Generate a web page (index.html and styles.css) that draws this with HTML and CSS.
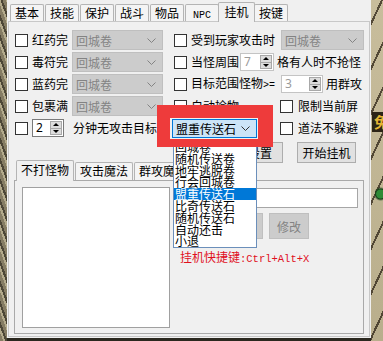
FILE: index.html
```html
<!DOCTYPE html>
<html lang="zh-CN">
<head>
    <meta charset="UTF-8">
    <meta name="viewport" content="width=device-width, initial-scale=1.0">
    <title>挂机设置</title>
    <link rel="stylesheet" href="styles.css">
</head>
<body>
    <span class="game-badge">免</span>
    <span class="game-green"></span>

    <div class="dialog">
        <div class="tabs">
            <span class="tab">基本</span>
            <span class="tab">技能</span>
            <span class="tab">保护</span>
            <span class="tab">战斗</span>
            <span class="tab">物品</span>
            <span class="tab"><span class="asc">NPC</span></span>
            <span class="tab active">挂机</span>
            <span class="tab">按键</span>
        </div>

        <div class="page">
            <div class="row">
                <div class="left">
                    <span class="check"></span><span class="label">红药完</span>
                    <div class="combo off short"><span>回城卷</span><svg width="9" height="5" viewBox="0 0 9 5"><path d="M.5 .5 4.5 4.5 8.5 .5" fill="none" stroke="currentColor"/></svg></div>
                </div>
                <div class="right">
                    <span class="check"></span><span class="label">受到玩家攻击时</span>
                    <div class="combo off long"><span>回城卷</span><svg width="9" height="5" viewBox="0 0 9 5"><path d="M.5 .5 4.5 4.5 8.5 .5" fill="none" stroke="currentColor"/></svg></div>
                </div>
            </div>

            <div class="row">
                <div class="left">
                    <span class="check"></span><span class="label">毒符完</span>
                    <div class="combo off short"><span>回城卷</span><svg width="9" height="5" viewBox="0 0 9 5"><path d="M.5 .5 4.5 4.5 8.5 .5" fill="none" stroke="currentColor"/></svg></div>
                </div>
                <div class="right">
                    <span class="check"></span><span class="label">当怪周围</span>
                    <div class="spin off range"><span class="val">7</span><span class="arrows"><i class="up"></i><i class="down"></i></span></div>
                    <span class="label tail">格有人时不抢怪</span>
                </div>
            </div>

            <div class="row">
                <div class="left">
                    <span class="check"></span><span class="label">蓝药完</span>
                    <div class="combo off short"><span>回城卷</span><svg width="9" height="5" viewBox="0 0 9 5"><path d="M.5 .5 4.5 4.5 8.5 .5" fill="none" stroke="currentColor"/></svg></div>
                </div>
                <div class="right">
                    <span class="check"></span><span class="label">目标范围怪物<span class="asc">&gt;=</span></span>
                    <div class="spin off count"><span class="val">3</span><span class="arrows"><i class="up"></i><i class="down"></i></span></div>
                    <span class="label tail">用群攻</span>
                </div>
            </div>

            <div class="row">
                <div class="left">
                    <span class="check"></span><span class="label">包裹满</span>
                    <div class="combo off short"><span>回城卷</span><svg width="9" height="5" viewBox="0 0 9 5"><path d="M.5 .5 4.5 4.5 8.5 .5" fill="none" stroke="currentColor"/></svg></div>
                </div>
                <div class="right">
                    <div class="pick"><span class="check"></span><span class="label">自动捡物</span></div>
                    <span class="check"></span><span class="label wide">限制当前屏</span>
                </div>
            </div>

            <div class="row">
                <span class="check"></span>
                <div class="spin minutes"><span class="val">2</span><span class="arrows"><i class="up"></i><i class="down"></i></span></div>
                <span class="label idle">分钟无攻击目标时</span>
                <div class="combo open"><span>盟重传送石</span><svg width="9" height="5" viewBox="0 0 9 5"><path d="M.5 .5 4.5 4.5 8.5 .5" fill="none" stroke="currentColor"/></svg></div>
                <span class="check dodge"></span><span class="label wide">道法不躲避</span>
            </div>

            <div class="actions">
                <button class="btn save">保存设置</button>
                <button class="btn start">开始挂机</button>
            </div>

            <div class="sub">
                <div class="subtabs">
                    <span class="subtab active">不打怪物</span>
                    <span class="subtab">攻击魔法</span>
                    <span class="subtab">群攻魔法</span>
                </div>
                <div class="subpage">
                    <div class="listbox"></div>
                    <div class="editor">
                        <div class="field"></div>
                        <div class="edit-actions">
                            <button class="btn off">添加</button>
                            <button class="btn off">修改</button>
                        </div>
                        <div class="hotkey">挂机快捷键<span class="asc">:Ctrl+Alt+X</span></div>
                    </div>
                </div>
            </div>
        </div>

        <ul class="droplist">
            <li>回城卷</li>
            <li>随机传送卷</li>
            <li>地牢逃脱卷</li>
            <li>行会回城卷</li>
            <li class="sel">盟重传送石</li>
            <li>比奇传送石</li>
            <li>随机传送石</li>
            <li>自动还击</li>
            <li>小退</li>
        </ul>

        <div class="mark"></div>
    </div>
</body>
</html>
```

FILE: styles.css
```css
* {
    box-sizing: border-box;
}

body {
    margin: 0;
    width: 383px;
    height: 341px;
    overflow: hidden;
    position: relative;
    font-family: "Noto Sans CJK SC", "Noto Sans", sans-serif;
    font-size: 12px;
    color: #000;
    background:
        repeating-linear-gradient(115deg, transparent 0 9px, rgba(45, 35, 22, 0.75) 9px 11px, transparent 11px 19px) right top / 12px 100% no-repeat,
        linear-gradient(#c8bd9c, #b9ae8c) right top / 12px 100% no-repeat,
        repeating-linear-gradient(70deg, #857c63 0 3px, #b3aa8b 3px 5px, #4c4636 5px 7px) left top / 7px 100% no-repeat,
        #2b281f;
}

.asc {
    font-family: "Liberation Mono", monospace;
    font-size: 10px;
}

.game-badge {
    position: absolute;
    left: 372px;
    top: 112px;
    width: 11px;
    height: 20px;
    overflow: hidden;
    background: #2c2416;
    color: #e6b634;
    font-size: 15px;
    font-weight: bold;
    line-height: 20px;
    padding-left: 2px;
}

.game-green {
    position: absolute;
    left: 375px;
    top: 186px;
    width: 8px;
    height: 16px;
    background: radial-gradient(circle at 70% 50%, #2f8a36 0 4px, #18401a 5px, transparent 7px);
}

.dialog {
    position: relative;
    margin-left: 7px;
    width: 364px;
    height: 338px;
    background: #f0f0f0;
}

/* main tabs */
.tabs {
    display: flex;
    align-items: flex-end;
    gap: 1px;
    height: 21px;
    padding-left: 3px;
}

.tab {
    min-width: 34px;
    height: 17px;
    padding: 0 4px;
    border: 1px solid #b4b4b4;
    border-bottom: none;
    border-radius: 2px 2px 0 0;
    background: #f4f4f4;
    text-align: center;
    line-height: 15px;
    white-space: nowrap;
}

.tab.active {
    position: relative;
    z-index: 1;
    min-width: 37px;
    height: 20px;
    margin: 0 -2px -1px;
    background: #f0f0f0;
    line-height: 17px;
}

.page {
    margin: 0 1px;
    height: 316px;
    border: 1px solid #c8c8c8;
    padding: 7px 0 0 6px;
}

/* option rows */
.row {
    display: flex;
    align-items: center;
    height: 22px;
}

.left {
    display: flex;
    align-items: center;
    width: 159px;
}

.right {
    display: flex;
    align-items: center;
}

.check {
    flex: none;
    width: 13px;
    height: 13px;
    border: 1px solid #333;
    background: #fff;
}

.label {
    margin-left: 4px;
    line-height: 14px;
    white-space: nowrap;
}

.label.wide {
    margin-left: 5px;
}

.label.tail {
    margin-left: 3px;
}

.pick {
    display: flex;
    align-items: center;
    width: 106px;
}

.combo {
    display: flex;
    align-items: center;
    justify-content: space-between;
    height: 20px;
    padding: 0 6px 0 3px;
    border: 1px solid #bfbfbf;
    white-space: nowrap;
}

.combo.off {
    background: #cccccc;
    color: #838383;
}

.combo.short {
    width: 91px;
    margin-left: 4px;
}

.combo.long {
    width: 83px;
    margin-left: 6px;
}

.combo.open {
    width: 85px;
    height: 19px;
    margin-left: 3px;
    border-color: #0078d7;
    background: #cce4f7;
    color: #000;
}

.combo.open svg {
    color: #333;
}

.spin {
    display: flex;
    height: 18px;
    border: 1px solid #7a7a7a;
    background: #fff;
}

.spin.off {
    border-color: #c4c4c4;
    color: #9a9a9a;
}

.spin .val {
    flex: 1;
    padding-left: 3px;
    font-family: "Noto Sans", sans-serif;
    line-height: 16px;
}

.spin .arrows {
    display: flex;
    flex-direction: column;
    width: 12px;
    margin: 1px;
    background: #dcdcdc;
    border: 1px solid #a8a8a8;
}

.spin .arrows i {
    flex: 1;
    display: flex;
    align-items: center;
    justify-content: center;
}

.spin .arrows .up {
    border-bottom: 1px solid #a8a8a8;
}

.spin .arrows .up::after {
    content: "";
    border-left: 3px solid transparent;
    border-right: 3px solid transparent;
    border-bottom: 3px solid #000;
}

.spin .arrows .down::after {
    content: "";
    border-left: 3px solid transparent;
    border-right: 3px solid transparent;
    border-top: 3px solid #000;
}

.spin.range {
    width: 34px;
    margin-left: 1px;
}

.spin.count {
    width: 42px;
    margin-left: 6px;
}

.spin.minutes {
    width: 32px;
    margin-left: 4px;
}

.label.idle {
    margin-left: 9px;
}

.check.dodge {
    margin-left: 23px;
}

/* buttons */
.actions {
    display: flex;
    justify-content: flex-end;
    gap: 14px;
    margin-top: 3px;
    padding-right: 13px;
}

.btn {
    height: 21px;
    padding: 0;
    border: 1px solid #adadad;
    background: #e1e1e1;
    font: inherit;
    color: #000;
}

.btn.save {
    width: 70px;
}

.btn.start {
    width: 59px;
}

.btn.off {
    width: 40px;
    height: 26px;
    border-color: #bfbfbf;
    background: #cccccc;
    color: #838383;
}

/* inner tabs */
.sub {
    width: 350px;
    margin: -3px 0 0 -1px;
}

.subtabs {
    display: flex;
    align-items: flex-end;
    gap: 1px;
    height: 20px;
    padding-left: 2px;
}

.subtab {
    height: 18px;
    padding: 0 4px;
    border: 1px solid #b4b4b4;
    border-bottom: none;
    border-radius: 2px 2px 0 0;
    background: #f4f4f4;
    line-height: 16px;
    white-space: nowrap;
}

.subtab.active {
    position: relative;
    z-index: 1;
    height: 21px;
    margin-bottom: -1px;
    background: #f0f0f0;
    line-height: 18px;
}

.subpage {
    display: flex;
    height: 154px;
    border: 1px solid #a9a9a9;
    padding: 6px 0 0 7px;
}

.listbox {
    width: 148px;
    height: 141px;
    border: 1px solid #a0a0a0;
    background: #fff;
}

.editor {
    display: flex;
    flex-direction: column;
    width: 179px;
    margin-left: 9px;
}

.field {
    height: 20px;
    margin-top: 1px;
    border: 1px solid #a6a6a6;
    background: #fff;
}

.edit-actions {
    display: flex;
    gap: 6px;
    margin-top: 5px;
    padding-left: 44px;
}

.hotkey {
    margin: 11px 0 0 1px;
    color: #e0101e;
    line-height: 14px;
    white-space: nowrap;
}

.hotkey .asc {
    font-size: 10.5px;
}

/* open combo list and the red annotation */
.droplist {
    position: absolute;
    left: 166px;
    top: 139px;
    width: 84px;
    margin: 0;
    padding: 1px 0 0;
    list-style: none;
    border: 1px solid #6b8fbb;
    background: #fff;
}

.droplist li {
    height: 11.8px;
    padding-left: 1px;
    line-height: 12px;
    white-space: nowrap;
}

.droplist li.sel {
    background: #0078d7;
    color: #fff;
}

.mark {
    position: absolute;
    left: 150px;
    top: 105px;
    width: 116px;
    height: 42px;
    border: solid #ee3b3b;
    border-width: 13px 15px 8px 13px;
}
```
